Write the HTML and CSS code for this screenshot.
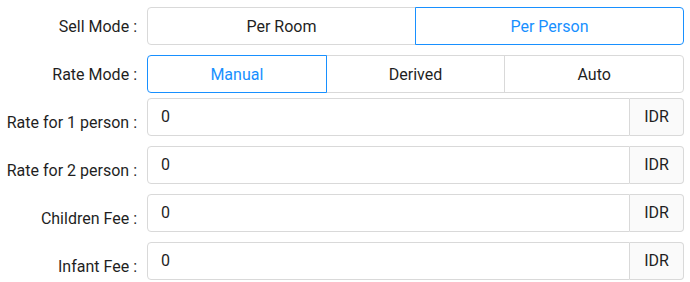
FILE: index.html
```html
<!DOCTYPE html>
<html>
<head>
<meta charset="utf-8">
<link rel="stylesheet" href="styles.css">
</head>
<body>
<div class="form">
  <div class="row row-radio">
    <div class="label"><span>Sell Mode</span><span class="colon">:</span></div>
    <div class="radio-group">
      <div class="rb">Per Room</div>
      <div class="rb active">Per Person</div>
    </div>
  </div>
  <div class="row row-radio row-tight">
    <div class="label"><span>Rate Mode</span><span class="colon">:</span></div>
    <div class="radio-group">
      <div class="rb active">Manual</div>
      <div class="rb">Derived</div>
      <div class="rb">Auto</div>
    </div>
  </div>
  <div class="row row-input">
    <div class="label"><span>Rate for 1 person</span><span class="colon">:</span></div>
    <div class="input-group">
      <div class="input">0</div>
      <div class="addon">IDR</div>
    </div>
  </div>
  <div class="row row-input">
    <div class="label"><span>Rate for 2 person</span><span class="colon">:</span></div>
    <div class="input-group">
      <div class="input">0</div>
      <div class="addon">IDR</div>
    </div>
  </div>
  <div class="row row-input">
    <div class="label"><span>Children Fee</span><span class="colon">:</span></div>
    <div class="input-group">
      <div class="input">0</div>
      <div class="addon">IDR</div>
    </div>
  </div>
  <div class="row row-input">
    <div class="label"><span>Infant Fee</span><span class="colon">:</span></div>
    <div class="input-group">
      <div class="input">0</div>
      <div class="addon">IDR</div>
    </div>
  </div>
</div>
</body>
</html>
```
FILE: styles.css
```css
html, body {
  margin: 0;
  padding: 0;
  background: #ffffff;
}
body {
  font-family: Roboto, "Liberation Sans", sans-serif;
  font-size: 16px;
  color: #1f1f1f;
}
.form {
  padding: 7px 6px 0 0;
  display: flex;
  flex-direction: column;
  gap: 10px;
}
.row {
  display: flex;
  align-items: flex-start;
}
.row-tight {
  margin-bottom: -5px;
}
.label {
  width: 147px;
  flex: none;
  box-sizing: border-box;
  height: 38px;
  display: flex;
  justify-content: flex-end;
  padding-top: 1px;
  line-height: 37px;
  white-space: nowrap;
}
.row-input .label {
  padding-top: 11px;
  line-height: 27px;
}
.colon {
  margin: 0 10px 0 4px;
}
.radio-group {
  flex: 1;
  display: flex;
}
.rb {
  flex: 1;
  box-sizing: border-box;
  height: 38px;
  padding-top: 1px;
  line-height: 35px;
  text-align: center;
  border: 1px solid #d9d9d9;
  margin-left: -1px;
  position: relative;
}
.rb:first-child {
  margin-left: 0;
  border-radius: 4px 0 0 4px;
}
.rb:last-child {
  border-radius: 0 4px 4px 0;
}
.rb.active {
  border-color: #1890ff;
  color: #1890ff;
  z-index: 1;
}
.input-group {
  flex: 1;
  display: flex;
  height: 38px;
}
.input {
  flex: 1;
  box-sizing: border-box;
  border: 1px solid #d9d9d9;
  border-radius: 4px 0 0 4px;
  padding: 0 13px;
  line-height: 36px;
}
.addon {
  box-sizing: border-box;
  width: 54px;
  border: 1px solid #d9d9d9;
  border-left: 0;
  border-radius: 0 4px 4px 0;
  background: #fafafa;
  text-align: center;
  line-height: 36px;
}
```
